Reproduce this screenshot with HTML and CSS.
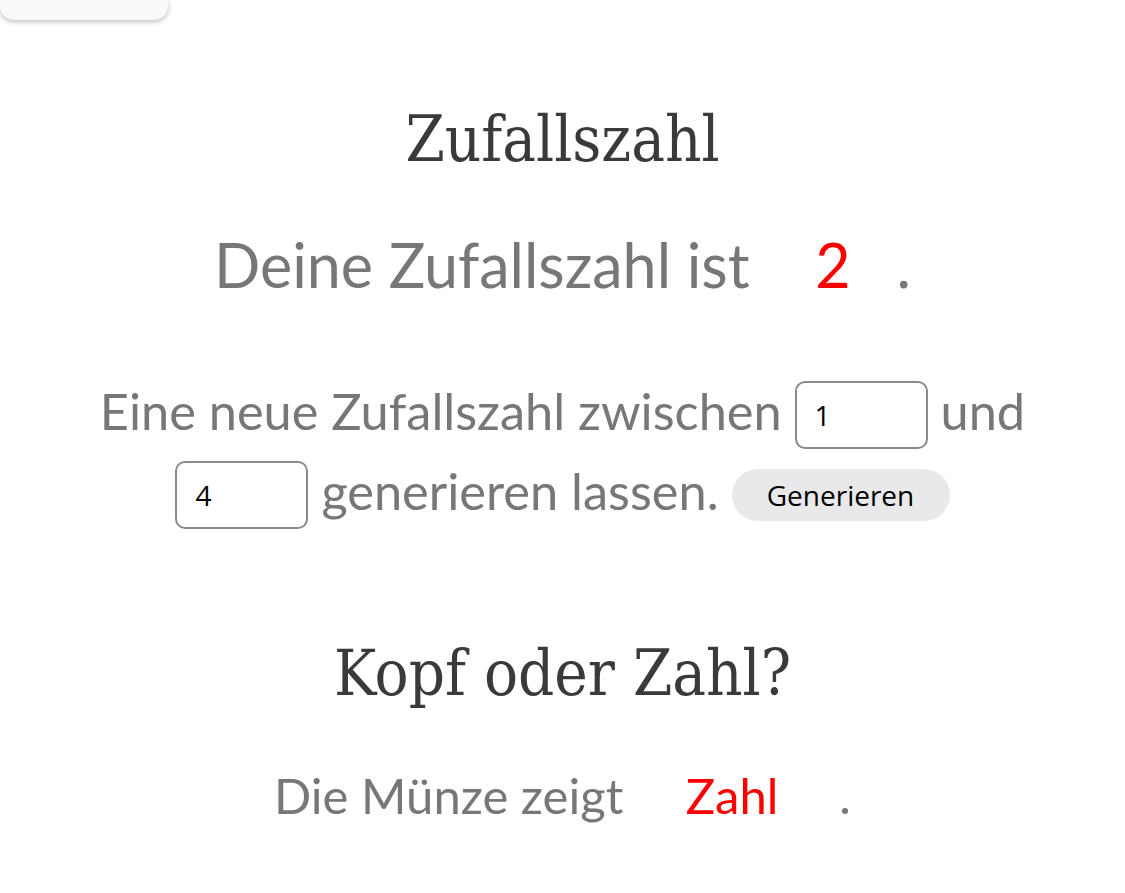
FILE: index.html
```html
<!DOCTYPE html>
<html lang="de">
<head>
<meta charset="utf-8">
<title>Zufallszahl</title>
<link rel="stylesheet" href="styles.css">
</head>
<body>
<div class="menu-card"></div>
<main class="page">
  <section class="block">
    <h1 class="title">Zufallszahl</h1>
    <p class="result">Deine Zufallszahl ist <span class="value">2</span>.</p>
    <form class="generator">
      Eine neue Zufallszahl zwischen <input class="num" type="text" value="1"> und
      <input class="num" type="text" value="4"> generieren lassen. <button class="btn" type="button">Generieren</button>
    </form>
  </section>
  <section class="block coin">
    <h1 class="title">Kopf oder Zahl?</h1>
    <p class="result small">Die Münze zeigt <span class="value wide">Zahl</span>.</p>
  </section>
</main>
</body>
</html>
```

FILE: styles.css
```css
html, body {
  margin: 0;
  padding: 0;
  background: #ffffff;
}
body {
  font-family: Lato, "Open Sans", sans-serif;
  color: #777777;
}
.menu-card {
  width: 168px;
  height: 20px;
  background: #f9f9f9;
  border-radius: 0 0 14px 14px;
  box-shadow: 0 2px 5px rgba(0,0,0,0.25);
}
.page {
  width: 960px;
  margin: 0 auto;
  text-align: center;
}
.title {
  font-family: "DejaVu Serif Condensed", "DejaVu Serif", serif;
  font-weight: normal;
  color: #3a3a3a;
  font-size: 63px;
  line-height: 80px;
  margin: 80px 0 0;
}
.result {
  font-size: 61px;
  line-height: 80px;
  margin: 45px 0 0;
}
.value {
  color: #ff0000;
  margin: 0 46px 0 50px;
}
.value.wide {
  margin: 0 61px 0 50px;
}
.generator {
  font-size: 50.5px;
  line-height: 80px;
  margin: 66px 0 0;
}
.num {
  box-sizing: border-box;
  width: 133px;
  height: 68px;
  border: 2px solid #8a8a8a;
  border-radius: 10px;
  font-family: "Open Sans", sans-serif;
  font-size: 28px;
  color: #000;
  padding: 0 0 0 18px;
  vertical-align: 4px;
  background: #fff;
}
.btn {
  width: 218px;
  height: 52px;
  border: none;
  border-radius: 26px;
  background: #e9e9ec;
  font-family: "Open Sans", sans-serif;
  font-size: 28px;
  color: #000;
  vertical-align: 4px;
}
.coin .title {
  margin-top: 103px;
}
.result.small {
  font-size: 49px;
  margin-top: 41px;
}
```
